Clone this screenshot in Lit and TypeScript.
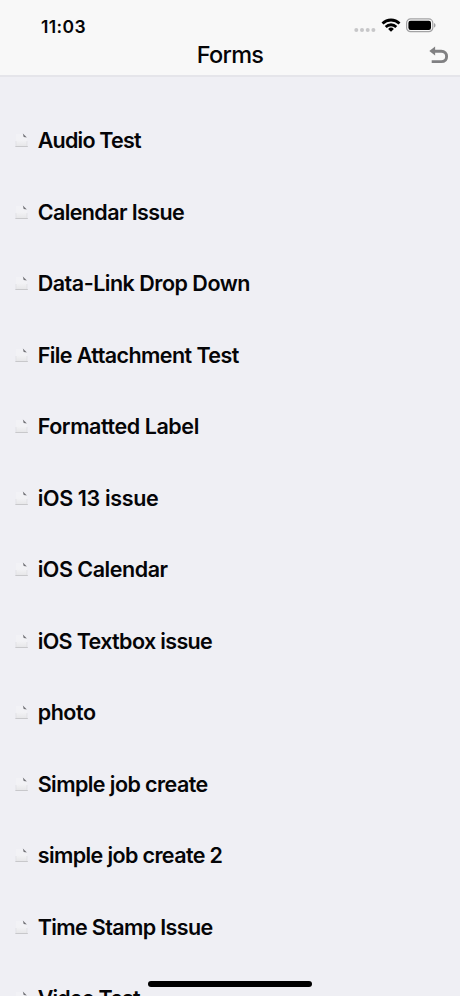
import { LitElement, html, css } from "lit";
import { customElement } from "lit/decorators.js";

interface FormEntry {
  title: string;
  tracking: number;
}

const FORMS: FormEntry[] = [
  { title: "Audio Test", tracking: -0.79 },
  { title: "Calendar Issue", tracking: -0.6 },
  { title: "Data-Link Drop Down", tracking: -0.49 },
  { title: "File Attachment Test", tracking: -0.58 },
  { title: "Formatted Label", tracking: -0.43 },
  { title: "iOS 13 issue", tracking: -0.35 },
  { title: "iOS Calendar", tracking: -0.47 },
  { title: "iOS Textbox issue", tracking: -0.64 },
  { title: "photo", tracking: -0.45 },
  { title: "Simple job create", tracking: -0.57 },
  { title: "simple job create 2", tracking: -0.61 },
  { title: "Time Stamp Issue", tracking: -0.63 },
  { title: "Video Test", tracking: -0.85 },
];

@customElement("app-root")
export class AppRoot extends LitElement {
  static styles = css`
    :host {
      display: flex;
      flex-direction: column;
      position: relative;
      height: 996px;
      overflow: hidden;
      background: #efeff4;
      color: #050507;
      font-family: Inter, "Liberation Sans", sans-serif;
    }
    svg { display: block; flex: none; }
    .header {
      flex: none;
      box-sizing: border-box;
      height: 77px;
      background: #f8f8f8;
      border-bottom: 2px solid #e5e5ea;
    }
    .status {
      display: flex;
      align-items: flex-start;
      justify-content: space-between;
      height: 36px;
      padding: 15px 24px 0 41px;
      box-sizing: border-box;
    }
    .time {
      padding-top: 1px;
      font-size: 17.5px;
      font-weight: 600;
      line-height: 21px;
      letter-spacing: 0.4px;
    }
    .indicators { display: flex; gap: 5px; padding-top: 2px; }
    .nav {
      display: grid;
      grid-template-columns: 1fr auto 1fr;
      align-items: center;
      height: 38px;
    }
    .title {
      grid-column: 2;
      font-size: 23.5px;
      font-weight: 500;
      line-height: 30px;
      letter-spacing: -0.7px;
    }
    .back { justify-self: end; margin-right: 11px; }
    .list { flex: none; list-style: none; margin: 0; padding: 28.25px 0 0 14px; }
    .row { display: flex; align-items: center; height: 71.5px; }
    .page { margin-right: 7.7px; }
    .label {
      padding-bottom: 1.5px;
      font-size: 21.5px;
      font-weight: 600;
      line-height: 28px;
      white-space: nowrap;
    }
    .home {
      position: absolute;
      left: 148px;
      bottom: 9px;
      width: 164px;
      height: 6px;
      border-radius: 3px;
      background: #000;
    }
  `;

  private pageIcon() {
    return html`<svg class="page" width="16" height="16" viewBox="0 0 16 16">
      <defs>
        <linearGradient id="sheet" x1="0" y1="0" x2="0" y2="1">
          <stop offset="0" stop-color="#f2f2f6" />
          <stop offset="0.5" stop-color="#f2f2f5" />
          <stop offset="1" stop-color="#e6e6e8" />
        </linearGradient>
      </defs>
      <path d="M2 1H9.4L13 4.6V13.5H2Z" fill="url(#sheet)" />
      <path d="M2 8V13.5M13 8V13.5" stroke="#dedee1" stroke-width="0.7" />
      <path d="M1.4 13.5H13.8" stroke="#c8c8cb" stroke-width="1" />
      <path d="M8.8 0.6L12.9 4.5L9.7 3.9Z" fill="#717176" />
    </svg>`;
  }

  render() {
    return html`
      <div class="header">
        <div class="status">
          <span class="time">11:03</span>
          <div class="indicators">
            <svg width="22" height="16" viewBox="0 0 22 16" fill="#c7c7c9">
              <circle cx="2.3" cy="13" r="2" />
              <circle cx="8" cy="13" r="2" />
              <circle cx="13.7" cy="13" r="2" />
              <circle cx="19.4" cy="13" r="2" />
            </svg>
            <svg width="20" height="16" viewBox="0 0 20 16" fill="none" stroke="#000" stroke-width="2.8">
              <path d="M1.5 6.4A12.3 12.3 0 0 1 18.5 6.4" />
              <path d="M4.7 9.9A7.6 7.6 0 0 1 15.3 9.9" />
              <path d="M10 14.8L7.1 11.9A4.2 4.2 0 0 1 12.9 11.9Z" fill="#000" stroke="none" />
            </svg>
            <svg width="30" height="16" viewBox="0 0 30 16">
              <rect x="0.6" y="1.9" width="26.2" height="12.8" rx="4" fill="none" stroke="#a2a2a4" stroke-width="1.2" />
              <rect x="2.4" y="3.7" width="22.6" height="9.3" rx="2.2" fill="#000" />
              <path d="M28 6C30 6.8 30 9.8 28 10.6Z" fill="#a2a2a4" />
            </svg>
          </div>
        </div>
        <div class="nav">
          <span class="title">Forms</span>
          <svg class="back" width="20" height="20" viewBox="0 0 20 20">
            <path d="M5 6.3H12.2C15.7 6.3 17.6 8.5 17.6 11.4C17.6 14.6 15.7 16.6 12.2 16.6H2.7" fill="none" stroke="#808082" stroke-width="2.9" />
            <path d="M0.3 6L6.1 1.4V10.4Z" fill="#808082" />
          </svg>
        </div>
      </div>
      <ul class="list">
        ${FORMS.map(
          (form) => html`<li class="row">
            ${this.pageIcon()}
            <span class="label" style="letter-spacing:${form.tracking}px">${form.title}</span>
          </li>`,
        )}
      </ul>
      <div class="home"></div>
    `;
  }
}
